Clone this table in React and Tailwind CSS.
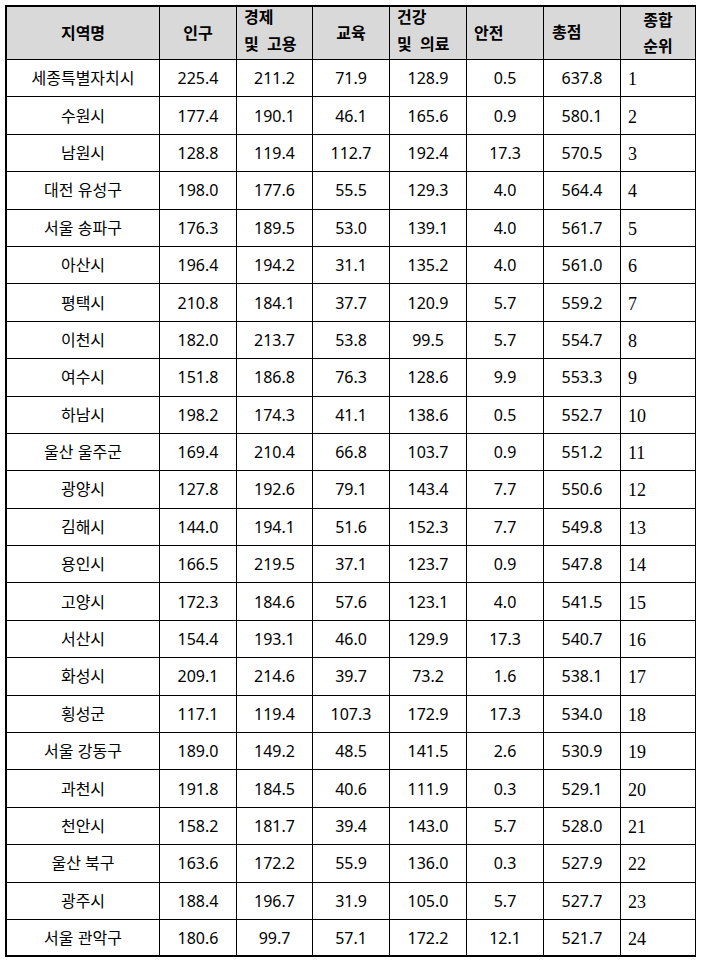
import React from "react";

const rows = [
  ["세종특별자치시", "225.4", "211.2", "71.9", "128.9", "0.5", "637.8", "1"],
  ["수원시", "177.4", "190.1", "46.1", "165.6", "0.9", "580.1", "2"],
  ["남원시", "128.8", "119.4", "112.7", "192.4", "17.3", "570.5", "3"],
  ["대전 유성구", "198.0", "177.6", "55.5", "129.3", "4.0", "564.4", "4"],
  ["서울 송파구", "176.3", "189.5", "53.0", "139.1", "4.0", "561.7", "5"],
  ["아산시", "196.4", "194.2", "31.1", "135.2", "4.0", "561.0", "6"],
  ["평택시", "210.8", "184.1", "37.7", "120.9", "5.7", "559.2", "7"],
  ["이천시", "182.0", "213.7", "53.8", "99.5", "5.7", "554.7", "8"],
  ["여수시", "151.8", "186.8", "76.3", "128.6", "9.9", "553.3", "9"],
  ["하남시", "198.2", "174.3", "41.1", "138.6", "0.5", "552.7", "10"],
  ["울산 울주군", "169.4", "210.4", "66.8", "103.7", "0.9", "551.2", "11"],
  ["광양시", "127.8", "192.6", "79.1", "143.4", "7.7", "550.6", "12"],
  ["김해시", "144.0", "194.1", "51.6", "152.3", "7.7", "549.8", "13"],
  ["용인시", "166.5", "219.5", "37.1", "123.7", "0.9", "547.8", "14"],
  ["고양시", "172.3", "184.6", "57.6", "123.1", "4.0", "541.5", "15"],
  ["서산시", "154.4", "193.1", "46.0", "129.9", "17.3", "540.7", "16"],
  ["화성시", "209.1", "214.6", "39.7", "73.2", "1.6", "538.1", "17"],
  ["횡성군", "117.1", "119.4", "107.3", "172.9", "17.3", "534.0", "18"],
  ["서울 강동구", "189.0", "149.2", "48.5", "141.5", "2.6", "530.9", "19"],
  ["과천시", "191.8", "184.5", "40.6", "111.9", "0.3", "529.1", "20"],
  ["천안시", "158.2", "181.7", "39.4", "143.0", "5.7", "528.0", "21"],
  ["울산 북구", "163.6", "172.2", "55.9", "136.0", "0.3", "527.9", "22"],
  ["광주시", "188.4", "196.7", "31.9", "105.0", "5.7", "527.7", "23"],
  ["서울 관악구", "180.6", "99.7", "57.1", "172.2", "12.1", "521.7", "24"],
];

const hc = "h-[53px] border-r border-b border-black bg-[#d9d9d9] font-bold text-[16px] text-black flex";

export default function App() {
  return (
    <div className="bg-white w-[701px] h-[964px] pt-[5px] pl-[5px] font-[family-name:Noto_Sans,Noto_Sans_CJK_KR,sans-serif]">
      <div className="w-[691px] border-t-2 border-l-2 border-black grid grid-cols-[153px_77px_76px_77px_77px_77px_77px_75px]">
        <div className={hc + " items-center justify-center"}>지역명</div>
        <div className={hc + " items-center justify-center"}>인구</div>
        <div className={hc + " flex-col items-start justify-start pl-[7px] leading-[27px] -mt-0"}>
          <span className="-mt-[3px]">경제</span>
          <span>및&nbsp; 고용</span>
        </div>
        <div className={hc + " items-center justify-center"}>교육</div>
        <div className={hc + " flex-col items-start justify-start pl-[7px] leading-[27px]"}>
          <span className="-mt-[3px]">건강</span>
          <span>및&nbsp; 의료</span>
        </div>
        <div className={hc + " items-center justify-start pl-[7px]"}>안전</div>
        <div className={hc + " items-center justify-start pl-[8px] pb-[3px]"}>총점</div>
        <div className={hc + " flex-col items-center justify-center leading-[26px]"}>
          <span>종합</span>
          <span>순위</span>
        </div>
        {rows.map((r, i) => {
          const last = i === rows.length - 1;
          const b = last ? "border-b-2" : "border-b";
          return (
            <React.Fragment key={i}>
              {r.slice(0, 7).map((c, j) => (
                <div
                  key={j}
                  className={
                    "h-[37.4px] border-r border-black flex items-center justify-center text-[16px] text-black " + b
                  }
                >
                  {c.replace(" ", "\u00a0")}
                </div>
              ))}
              <div
                className={
                  "h-[37.4px] border-r border-black flex items-center justify-start pl-[7px] pt-[3px] text-[18px] text-black font-[family-name:Liberation_Serif,serif] " + b
                }
              >
                {r[7]}
              </div>
            </React.Fragment>
          );
        })}
      </div>
    </div>
  );
}
